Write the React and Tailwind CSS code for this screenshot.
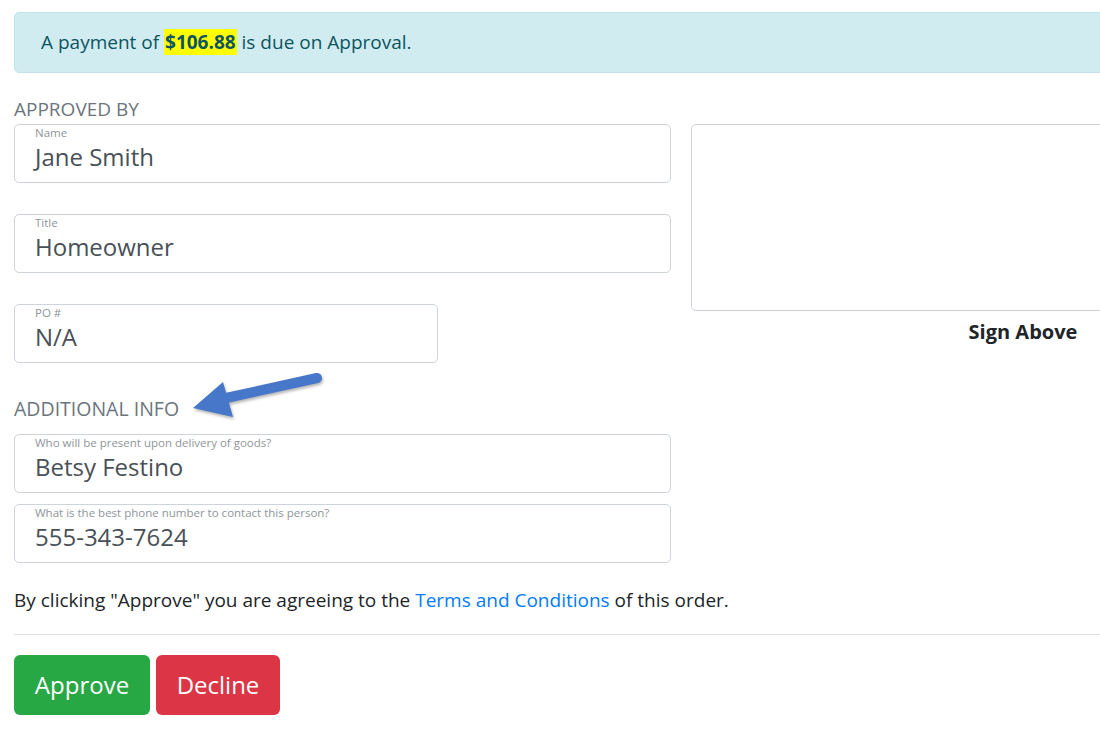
import React from "react";

function Field({ label, value, className = "" }) {
  return (
    <div className={`flex h-[59px] flex-col rounded-[5px] border border-[#ced4da] bg-white px-[20px] pt-[2px] ${className}`}>
      <span className="text-[11.5px] leading-[12px] text-[#8f959a]">{label}</span>
      <span className="mt-[3px] text-[24px] leading-[30px] text-[#495057]">{value}</span>
    </div>
  );
}

export default function App() {
  return (
    <div className="relative h-[729px] w-[1100px] overflow-hidden bg-white font-['Open_Sans',sans-serif] text-[#212529]">
      <div className="w-[1341px] px-[14px] pt-[12px]">
        <div className="flex h-[61px] items-center rounded-[5px] border border-[#bee5eb] bg-[#d1ecf1] px-[26px] text-[19px] text-[#0c5460]">
          <span>
            A payment of <mark className="bg-[#ffff00] px-[1px] font-bold text-[#0c5460]">$106.88</mark> is due on Approval.
          </span>
        </div>

        <div className="mt-[24px] flex">
          <div className="w-[657px] shrink-0">
            <div className="text-[19px] leading-[24px] text-[#6c757d]">APPROVED BY</div>
            <Field className="mt-[3px]" label="Name" value="Jane Smith" />
            <Field className="mt-[31px]" label="Title" value="Homeowner" />
            <Field className="mt-[31px] w-[424px]" label="PO #" value="N/A" />
            <div className="mt-[34px] text-[19.5px] leading-[24px] text-[#6c757d]">ADDITIONAL INFO</div>
            <Field className="mt-[13px]" label="Who will be present upon delivery of goods?" value="Betsy Festino" />
            <Field className="mt-[11px]" label="What is the best phone number to contact this person?" value="555-343-7624" />
          </div>
          <div className="ml-[20px] mt-[27px] w-[664px] shrink-0">
            <div className="h-[187px] rounded-[5px] border border-[#ced4da]" />
            <div className="mt-[9px] text-center text-[20px] font-bold leading-[24px] text-[#212529]">Sign Above</div>
          </div>
        </div>

        <p className="mt-[22px] text-[19px] leading-[30px] text-[#212529]">
          By clicking "Approve" you are agreeing to the <a className="text-[#007bff]">Terms and Conditions</a> of this order.
        </p>
        <hr className="mt-[19px] border-t border-[#e2e2e2]" />
        <div className="mt-[20px] flex gap-[6px]">
          <button className="h-[60px] w-[136px] rounded-[6px] bg-[#28a745] text-[24px] text-white">Approve</button>
          <button className="h-[60px] w-[124px] rounded-[6px] bg-[#dc3545] text-[24px] text-white">Decline</button>
        </div>
      </div>

      <svg className="absolute left-[180px] top-[360px]" width="160" height="70" viewBox="0 0 160 70" style={{ filter: "drop-shadow(1px 2px 1.5px rgba(0,0,0,0.3))" }}>
        <line x1="46" y1="38" x2="137" y2="18" stroke="#4677c8" strokeWidth="10" strokeLinecap="round" />
        <polygon points="13,48 43,22 53,57" fill="#4677c8" />
      </svg>
    </div>
  );
}
